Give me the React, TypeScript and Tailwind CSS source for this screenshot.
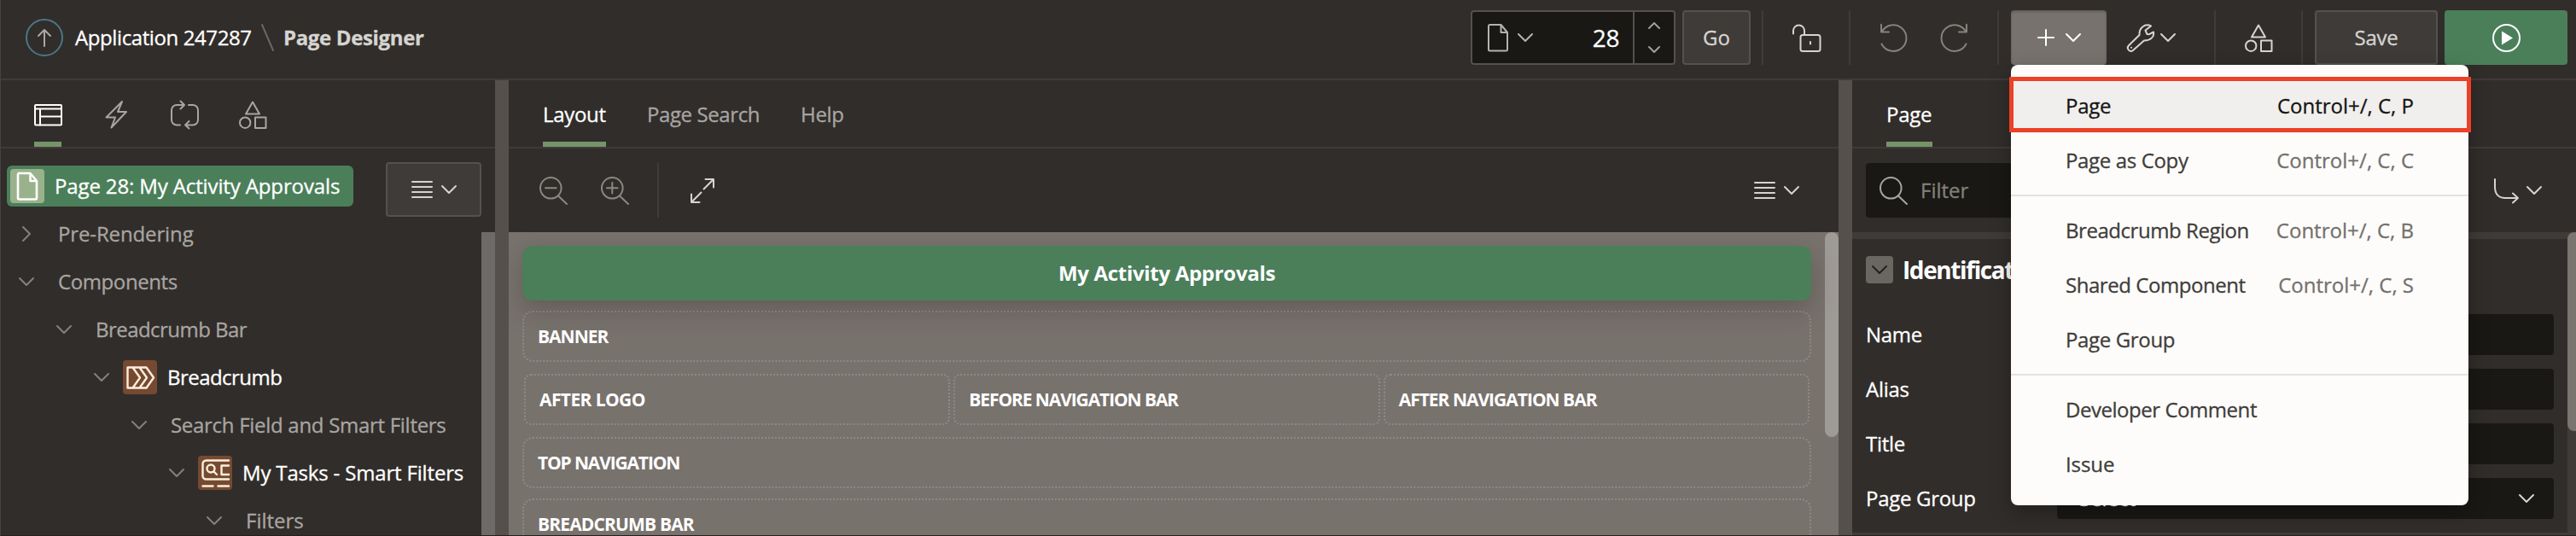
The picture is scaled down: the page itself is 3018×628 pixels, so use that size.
import type { ReactNode } from "react";

type IconProps = { className?: string; w?: number; h?: number; sw?: number; children?: ReactNode };

function Svg({ className = "", w = 32, h = 32, sw = 2, children }: IconProps) {
  return (
    <svg
      width={w}
      height={h}
      viewBox={`0 0 ${w} ${h}`}
      fill="none"
      stroke="currentColor"
      strokeWidth={sw}
      strokeLinecap="round"
      strokeLinejoin="round"
      className={`block shrink-0 overflow-visible ${className}`}
    >
      {children}
    </svg>
  );
}

const ChevronDown = ({ className }: { className?: string }) => (
  <Svg w={18} h={10} className={className}><path d="M1 1l8 8 8-8" /></Svg>
);
const ChevronRight = ({ className }: { className?: string }) => (
  <Svg w={10} h={18} className={className}><path d="M1 1l8 8-8 8" /></Svg>
);
const FileIcon = ({ className, sw }: { className?: string; sw?: number }) => (
  <Svg w={24} h={32} sw={sw} className={className}>
    <path d="M3 1h12.500l7.500 9v20a1.500 1.500 0 0 1-1.500 1.500H2.500A1.500 1.500 0 0 1 1 30V2.500A1.500 1.500 0 0 1 3 1zM15.500 1.500V10H23" />
  </Svg>
);
const LinesIcon = () => (
  <Svg w={24} h={22}><path d="M1 2h23M1 8h23M1 14h23M1 20h23" /></Svg>
);
const ShapesIcon = ({ className }: { className?: string }) => (
  <Svg className={className}>
    <path d="M16 1.500L24 15.500H8zM19 19.500h12.500v12.500H19z" />
    <circle cx="7.200" cy="25.700" r="6.200" />
  </Svg>
);
const LayoutIcon = () => (
  <Svg><rect x="1" y="5" width="31" height="23.500" rx="1" /><path d="M1 9.500h31M7 9.500v19M7 18.500h25" /></Svg>
);
const BoltIcon = () => (
  <Svg><path d="M23 1L18 13h10L10.500 31.500 15 19.500H4.500z" /></Svg>
);
const LoopIcon = () => (
  <Svg>
    <path d="M11 28.500H7a6 6 0 0 1-6-6V11a6 6 0 0 1 6-6h9M11.500.5L16 5l-4.500 4.500M21 5h5a6 6 0 0 1 6 6v11.500a6 6 0 0 1-6 6h-9M21.500 24L17 28.500l4.500 4" />
  </Svg>
);
const SearchIcon = ({ sign }: { sign?: "plus" | "minus" }) => (
  <Svg>
    <circle cx="13.300" cy="13.300" r="12.300" />
    <path d="M22 22.500L32 32" />
    {sign && <path d="M7 13.300h12.600" />}
    {sign === "plus" && <path d="M13.300 7v12.600" />}
  </Svg>
);
const ExpandIcon = () => (
  <Svg w={28} h={29}><path d="M15.500 12.500L27 1M17.500 1H27v9.500M12.500 16.500L1 28M1 18.500V28h9.500" /></Svg>
);
const LockOpenIcon = () => (
  <Svg>
    <rect x="9.500" y="13" width="23" height="19" rx="2.500" />
    <path d="M1 11.500V8a6.500 6.500 0 0 1 13 0v5M21 21v2.500" />
  </Svg>
);
const UndoIcon = ({ flip }: { flip?: boolean }) => (
  <Svg className={flip ? "-scale-x-100" : ""}>
    <path d="M1.500 23.500A15.300 15.300 0 1 0 1.800 9.200M1 .8V9.500h9" />
  </Svg>
);
const WrenchIcon = () => (
  <Svg>
    <path d="M28 2.500L21.500 7.500l2 4.500 2.500.2 5-2.700c1 5.500-3.500 10.200-11 10L7 31a3.800 3.800 0 0 1-5.200-5.500L14.500 13C14 4.500 21-1 28 2.500z" />
    <path d="M5 27.800h.1" />
  </Svg>
);
const BranchIcon = () => (
  <Svg w={29} h={29}><path d="M1 1v9c0 9 5 13 12 13h15M22 17.500l6 5.500-6 5.500" /></Svg>
);
const PlayIcon = () => (
  <Svg><circle cx="16.500" cy="16.500" r="15.500" /><path fill="currentColor" stroke="none" d="M11 8.500v16l13-8z" /></Svg>
);
const BreadcrumbIcon = () => (
  <Svg sw={2.400}><path d="M1.500 4.500h22L32 16.500 23.500 28.500h-22zM7.500 4.500L16 16.500 7.500 28.500M15.500 4.500L24 16.500 15.500 28.500" /></Svg>
);
const SmartFiltersIcon = () => (
  <Svg sw={2.400}>
    <path d="M32 1.500H5.500a4 4 0 0 0-4 4V19.500a4 4 0 0 0 4 4H32M32 7.500h-8.500V18H32M1.500 31.500H13.500M19.500 31.500H32M14.500 14.500l3.500 3.500" />
    <circle cx="11" cy="11" r="4.500" />
  </Svg>
);

function Divider() {
  return <div className="h-16 w-0.5 bg-[#3f3b38]" />;
}

function Header() {
  return (
    <header className="flex h-[94px] shrink-0 items-start border-b-2 border-[#3f3b38] pl-[29px] pr-[10px] pt-3">
      <div className="flex h-16 items-center">
        <span className="flex h-11 w-11 items-center justify-center rounded-full border-2 border-[#4a7786] text-[#aba8a5]">
          <Svg w={16} h={20}><path d="M8 20V1M1 8l7-7 7 7" /></Svg>
        </span>
        <span className="ml-[14px] w-[218px] tracking-[-0.4px] text-white">Application 247287</span>
        <Svg w={15} h={32} className="text-[#6b6763]"><path d="M1 1l13 30" /></Svg>
        <span className="ml-[11px] font-bold tracking-[-0.35px] text-[#d6d4d1]">Page Designer</span>
      </div>
      <div className="ml-auto flex h-16 text-[#d6d4d1]">
        <div className="flex w-60 rounded border-2 border-[#55514d] bg-[#191815]">
          <div className="flex flex-1 items-center pl-[18px] pr-4 text-[#b5b2af]">
            <FileIcon />
            <ChevronDown className="ml-[11px]" />
            <span className="ml-auto text-[28px] tracking-[-0.4px] text-white">28</span>
          </div>
          <div className="flex w-12 flex-col items-center justify-between border-l-2 border-[#55514d] py-3 text-[#a19e9b]">
            <Svg w={14} h={8}><path d="M1 7l6-6 6 6" /></Svg>
            <Svg w={14} h={8}><path d="M1 1l6 6 6-6" /></Svg>
          </div>
        </div>
        <div className="ml-2 flex w-20 items-center justify-center rounded border-2 border-[#55514d] bg-[#3f3b38]">Go</div>
        <div className="ml-[13px]"><Divider /></div>
        <div className="flex w-[100px] items-center justify-center"><LockOpenIcon /></div>
        <Divider />
        <div className="flex w-[172px] items-center gap-[38px] pl-[35px] text-[#85817d]">
          <UndoIcon />
          <UndoIcon flip />
        </div>
        <Divider />
        <div className="ml-3.5 flex w-28 items-center justify-center gap-[13px] rounded bg-[#77726d] text-white shadow-[inset_0_2px_3px_rgba(0,0,0,0.2)]">
          <Svg w={20} h={20}><path d="M10 1v18M1 10h18" /></Svg>
          <ChevronDown />
        </div>
        <div className="flex w-[126px] items-center pl-6">
          <WrenchIcon />
          <ChevronDown className="ml-[7px]" />
        </div>
        <Divider />
        <div className="flex w-[100px] items-center justify-center"><ShapesIcon /></div>
        <Divider />
        <div className="ml-3.5 flex w-36 items-center justify-center rounded border-2 border-[#55514d] bg-[#3f3b38] tracking-[-0.3px]">Save</div>
        <div className="ml-2 flex w-36 items-center justify-center rounded bg-[#4b7f5a] text-white"><PlayIcon /></div>
      </div>
    </header>
  );
}

function TabBar({ children, className = "" }: { children: ReactNode; className?: string }) {
  return <div className={`flex h-20 shrink-0 gap-12 border-b-2 border-[#3f3b38] ${className}`}>{children}</div>;
}

function Tab({ active, children, className = "" }: { active?: boolean; children: ReactNode; className?: string }) {
  return (
    <div
      className={`flex h-[78px] items-center whitespace-nowrap border-b-[6px] pt-2 ${
        active ? "border-[#769469] text-white" : "border-transparent text-[#a8a5a2]"
      } ${className}`}
    >
      {children}
    </div>
  );
}

type Node = { label: string; pad: string; tracking: string; closed?: boolean; icon?: ReactNode };
const nodes: Node[] = [
  { label: "Pre-Rendering", pad: "pl-[20px]", tracking: "tracking-[-0.13px]", closed: true },
  { label: "Components", pad: "pl-[20px]", tracking: "tracking-[-0.4px]" },
  { label: "Breadcrumb Bar", pad: "pl-[64px]", tracking: "tracking-[-0.54px]" },
  { label: "Breadcrumb", pad: "pl-[108px]", tracking: "tracking-[-0.54px]", icon: <BreadcrumbIcon /> },
  { label: "Search Field and Smart Filters", pad: "pl-[152px]", tracking: "tracking-[-0.29px]" },
  { label: "My Tasks - Smart Filters", pad: "pl-[196px]", tracking: "tracking-[-0.17px]", icon: <SmartFiltersIcon /> },
  { label: "Filters", pad: "pl-[240px]", tracking: "tracking-[0px]" },
];

function TreePane() {
  return (
    <section className="flex w-[579px] shrink-0 flex-col overflow-hidden">
      <TabBar className="pl-[39px]">
        <Tab active className="w-8"><LayoutIcon /></Tab>
        <Tab className="w-8"><BoltIcon /></Tab>
        <Tab className="w-8"><LoopIcon /></Tab>
        <Tab className="w-8"><ShapesIcon /></Tab>
      </TabBar>
      <div className="flex min-h-0 flex-1">
        <div className="flex min-w-0 flex-1 flex-col pt-4">
          <div className="flex h-14 shrink-0 items-start justify-between pl-[7px]">
            <div className="mt-1 flex h-12 w-[406px] items-center rounded-md bg-[#4b7f5a] pl-1 text-white">
              <span className="flex h-10 w-10 items-center justify-center rounded bg-[#9ab28c]"><FileIcon sw={2.6} /></span>
              <span className="ml-3 tracking-[-0.13px]">Page 28: My Activity Approvals</span>
            </div>
            <div className="flex h-16 w-28 shrink-0 items-center justify-center gap-[11px] rounded border-2 border-[#55514d] bg-[#3f3b38] text-[#d6d4d1]">
              <LinesIcon />
              <ChevronDown />
            </div>
          </div>
          {nodes.map((n) => (
            <div key={n.label} className={`flex h-14 shrink-0 items-center whitespace-nowrap text-[#a8a5a2] ${n.pad}`}>
              <span className="flex w-5 justify-center text-[#85817d]">{n.closed ? <ChevronRight /> : <ChevronDown />}</span>
              {n.icon ? (
                <>
                  <span className="ml-[15px] flex h-10 w-10 items-center justify-center rounded bg-[#754a31] text-[#fbeedd]">{n.icon}</span>
                  <span className={`ml-3 text-white ${n.tracking}`}>{n.label}</span>
                </>
              ) : (
                <span className={`ml-[27px] ${n.tracking}`}>{n.label}</span>
              )}
            </div>
          ))}
        </div>
        <div className="mt-[98px] w-4 shrink-0 bg-[#6e6a67]" />
      </div>
    </section>
  );
}

function Splitter() {
  return <div className="w-4 shrink-0 bg-[#55504b]" />;
}

function Slot({ label, className = "" }: { label: string; className?: string }) {
  return (
    <div className={`flex h-[60px] shrink-0 items-center whitespace-nowrap border-2 border-dotted border-[#8d8984] px-4 text-[21px] font-bold text-white [-webkit-text-stroke:0px] ${className}`}>
      {label}
    </div>
  );
}

function LayoutPane() {
  return (
    <section className="flex w-[1558px] shrink-0 flex-col overflow-hidden">
      <TabBar className="pl-10">
        <Tab active className="w-[74px] tracking-[-0.3px]">Layout</Tab>
        <Tab className="w-[132px] tracking-[-0.4px]">Page Search</Tab>
        <Tab className="tracking-[-0.3px]">Help</Tab>
      </TabBar>
      <div className="flex h-[98px] shrink-0 items-center pl-9 pr-[46px] text-[#d6d4d1]">
        <span className="text-[#8b8783]"><SearchIcon sign="minus" /></span>
        <span className="ml-10 text-[#8b8783]"><SearchIcon sign="plus" /></span>
        <div className="ml-[34px]"><Divider /></div>
        <span className="ml-[37px]"><ExpandIcon /></span>
        <span className="ml-auto flex items-center gap-[11px]">
          <LinesIcon />
          <ChevronDown />
        </span>
      </div>
      <div className="flex min-h-0 flex-1 bg-[#78726d]">
        <div className="flex min-w-0 flex-1 flex-col pl-4 pr-4 pt-4">
          <div className="relative flex h-16 shrink-0 items-center justify-center rounded-xl bg-[#4b7f5a] font-bold tracking-[-0.3px] text-white shadow-[0_12px_30px_rgba(40,30,25,0.25)] [-webkit-text-stroke:0px]">
            My Activity Approvals
          </div>
          <Slot label="BANNER" className="mt-3 rounded-xl tracking-[-1px]" />
          <div className="mt-3.5 flex gap-1 px-0.5">
            <Slot label="AFTER LOGO" className="flex-1 rounded-lg tracking-[-0.6px]" />
            <Slot label="BEFORE NAVIGATION BAR" className="flex-1 rounded-lg tracking-[-1.1px]" />
            <Slot label="AFTER NAVIGATION BAR" className="flex-1 rounded-lg tracking-[-1px]" />
          </div>
          <Slot label="TOP NAVIGATION" className="mt-3.5 rounded-xl tracking-[-1.15px]" />
          <Slot label="BREADCRUMB BAR" className="mt-3 rounded-xl tracking-[-0.85px]" />
        </div>
        <div className="w-4 shrink-0"><div className="h-60 rounded-full bg-[#9e9a96]" /></div>
      </div>
    </section>
  );
}

const fields = ["Name", "Alias", "Title", "Page Group"];

function PropertyPane() {
  return (
    <section className="flex min-w-0 flex-1 flex-col overflow-hidden">
      <TabBar className="pl-10">
        <Tab active className="w-[54px] tracking-[-0.3px]">Page</Tab>
      </TabBar>
      <div className="flex h-[98px] shrink-0 items-center pl-4 pr-10 text-[#d6d4d1]">
        <div className="flex h-16 w-[640px] items-center rounded bg-[#191815] pl-4 text-[#83807b]">
          <span className="text-[#a8a5a2]"><SearchIcon /></span>
          <span className="ml-4">Filter</span>
        </div>
        <span className="ml-auto flex items-center gap-[9px]">
          <BranchIcon />
          <ChevronDown />
        </span>
      </div>
      <div className="flex min-h-0 flex-1">
        <div className="flex min-w-0 flex-1 flex-col border-t-8 border-[#3f3b38] text-white">
          <div className="flex h-[72px] shrink-0 items-center pl-4">
            <span className="flex h-8 w-8 items-center justify-center rounded bg-[#6a6661] text-[#23211e]"><ChevronDown /></span>
            <span className="ml-[11px] text-[28px] font-bold tracking-[-1.4px] [-webkit-text-stroke:0px]">Identification</span>
          </div>
          <div className="flex flex-col gap-4 pb-4 pl-4 pr-4 pt-4">
            {fields.map((f) => (
              <div key={f} className="flex h-12 items-center">
                <span className="w-56 tracking-[-0.3px]">{f}</span>
                <span className="flex h-12 flex-1 items-center justify-between rounded bg-[#191815] pl-3 pr-[23px]">
                  {f === "Page Group" && (
                    <>
                      <span>- Select -</span>
                      <ChevronDown className="text-[#d6d4d1]" />
                    </>
                  )}
                </span>
              </div>
            ))}
          </div>
          <div className="h-1 shrink-0 bg-[#3f3b38]" />
        </div>
        <div className="w-2.5 shrink-0 overflow-hidden bg-[#3f3b38]"><div className="h-[233px] w-4 rounded-lg bg-[#7a7571]" /></div>
      </div>
    </section>
  );
}

type Entry = { label: string; keys?: string; tracking: string; active?: boolean };
const groups: Entry[][] = [
  [
    { label: "Page", keys: "Control+/, C, P", tracking: "tracking-[-0.3px]", active: true },
    { label: "Page as Copy", keys: "Control+/, C, C", tracking: "tracking-[-0.35px]" },
  ],
  [
    { label: "Breadcrumb Region", keys: "Control+/, C, B", tracking: "tracking-[-0.45px]" },
    { label: "Shared Component", keys: "Control+/, C, S", tracking: "tracking-[-0.45px]" },
    { label: "Page Group", tracking: "tracking-[-0.35px]" },
  ],
  [
    { label: "Developer Comment", tracking: "tracking-[-0.46px]" },
    { label: "Issue", tracking: "tracking-[-0.1px]" },
  ],
];

function CreateMenu() {
  return (
    <div className="absolute left-[2355px] top-[76px] h-[516px] w-[536px] rounded-lg bg-[#fdfcfa] py-4 shadow-[0_8px_24px_rgba(0,0,0,0.3)]">
      {groups.map((g, i) => (
        <div key={i} className={i > 0 ? "mt-2 border-t-2 border-[#e3e2e0] pt-2" : ""}>
          {g.map((e) => (
            <div
              key={e.label}
              className={`flex h-16 items-center justify-between px-16 ${e.active ? "bg-[#f1efed] text-[#161513]" : "text-[#403d3b]"}`}
            >
              <span className={e.tracking}>{e.label}</span>
              {e.keys && <span className={e.active ? "" : "text-[#75716e]"}>{e.keys}</span>}
            </div>
          ))}
        </div>
      ))}
      <div className="absolute -left-0.5 top-3.5 h-[65px] w-[541px] border-[5px] border-[#ec4127]" />
    </div>
  );
}

export default function App() {
  return (
    <div className="relative flex h-[628px] w-[3018px] flex-col overflow-hidden border-b border-l border-b-[#2a1d20] border-l-[#454240] bg-[#312d2a] font-['Open_Sans','Noto_Sans',sans-serif] text-[24px] leading-none [-webkit-text-stroke:0.3px]">
      <Header />
      <div className="flex min-h-0 flex-1">
        <TreePane />
        <Splitter />
        <LayoutPane />
        <Splitter />
        <PropertyPane />
      </div>
      <CreateMenu />
    </div>
  );
}
